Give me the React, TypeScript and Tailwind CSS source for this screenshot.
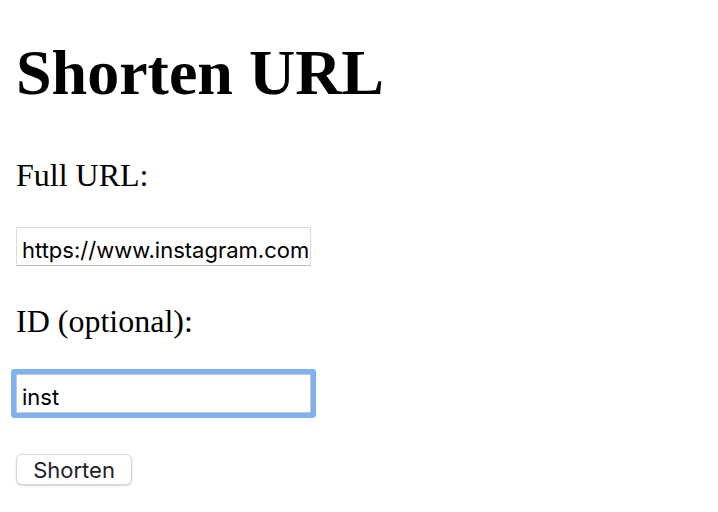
import { useState } from "react";

export default function App() {
  const [url, setUrl] = useState("https://www.instagram.com");
  const [id, setId] = useState("inst");

  return (
    <div className="min-h-[512px] bg-white px-4 font-['Liberation_Serif',serif] text-black">
      <h1 className="pt-[36px] text-[64px] font-bold leading-[74px]">Shorten URL</h1>

      <form onSubmit={(e) => e.preventDefault()}>
        <p className="mt-[47px] text-[32px] leading-[37px]">Full URL:</p>
        <input
          type="text"
          value={url}
          onChange={(e) => setUrl(e.target.value)}
          className="mt-[33px] block h-[39px] w-[295px] border border-[#dcdcdc] border-b-[#bdbdbd] bg-white pt-[6px] pl-[5px] pr-0 font-['Inter',sans-serif] text-[22px] text-black outline-none"
        />

        <p className="mt-[37px] text-[32px] leading-[37px]">ID (optional):</p>
        <input
          type="text"
          value={id}
          onChange={(e) => setId(e.target.value)}
          className="mt-[34px] block h-[39px] w-[295px] rounded-[1px] border border-[#c8c8c8] bg-white pt-[6px] pl-[5px] font-['Inter',sans-serif] text-[22px] text-black outline-none ring-[5px] ring-[#80b1f5]"
        />

        <button
          type="submit"
          className="mt-[41px] block h-[31px] w-[116px] rounded-[6px] border border-[#d6d6d6] bg-white font-['Inter',sans-serif] text-[22px] leading-none text-[#222] shadow-[0_1px_2px_rgba(0,0,0,0.18)]"
        >
          Shorten
        </button>
      </form>
    </div>
  );
}
